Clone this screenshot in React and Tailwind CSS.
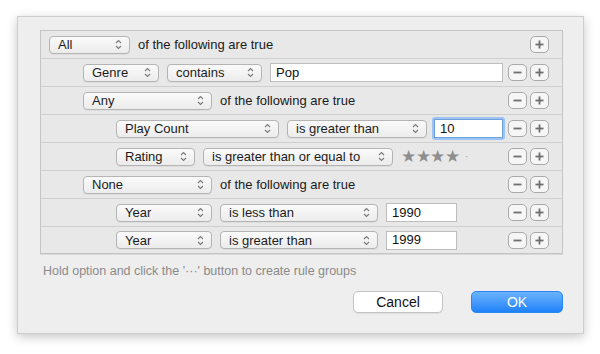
import React from 'react'

const font = { fontFamily: '"Liberation Sans", Arial, sans-serif' }

function Chevrons(){
  return (
    <svg width="7" height="11" viewBox="0 0 7 11" className="shrink-0">
      <path d="M1 4 L3.5 1.5 L6 4" fill="none" stroke="#7a7a7a" strokeWidth="1.1" />
      <path d="M1 7 L3.5 9.5 L6 7" fill="none" stroke="#7a7a7a" strokeWidth="1.1" />
    </svg>
  )
}

function Popup({ label, w }){
  return (
    <div className="flex h-[18px] items-center justify-between rounded-[4px] border border-[#b4b4b4] bg-gradient-to-b from-[#fafafa] to-[#ececec] pl-[8px] pr-[7px] text-[13px] text-[#1c1c1c] shadow-[0_1px_0_rgba(0,0,0,0.04)]"
         style={{ width: w }}>
      <span className="leading-none">{label}</span>
      <Chevrons />
    </div>
  )
}

function Field({ value, w, focus }){
  if(focus){
    return (
      <div className="rounded-[3px] p-[2px] bg-[#9cc3f2]" style={{ width: w }}>
        <div className="flex h-[19px] items-center border border-[#6fa0dc] bg-white pl-[5px] text-[13px] text-[#111]">{value}</div>
      </div>
    )
  }
  return (
    <div className="flex h-[19px] items-center border border-[#bdbdbd] bg-white pl-[5px] text-[13px] text-[#111]" style={{ width: w }}>{value}</div>
  )
}

function SmallBtn({ sign }){
  return (
    <div className="flex h-[17px] w-[19px] items-center justify-center rounded-[5px] border border-[#a9a9a9] bg-[#f6f6f6]">
      <svg width="9" height="9" viewBox="0 0 9 9">
        <path d="M0.5 4.5 H8.5" stroke="#6e6e6e" strokeWidth="1.8" />
        {sign === '+' && <path d="M4.5 0.5 V8.5" stroke="#6e6e6e" strokeWidth="1.8" />}
      </svg>
    </div>
  )
}

function Row({ pad, children, minus = true, last }){
  return (
    <div className={`flex items-center ${last ? 'h-[26px]' : 'h-[28px] border-b border-[#cfcfcf]'} ${pad}`}>
      <div className="flex items-center gap-[8px]">{children}</div>
      <div className="ml-auto flex items-center gap-[3px] pr-[13px]">
        {minus ? <SmallBtn sign="-" /> : null}
        <SmallBtn sign="+" />
      </div>
    </div>
  )
}

export default function App(){
  return (
    <div className="h-[354px] w-[600px] overflow-hidden bg-white pl-[17px] pt-[16px]" style={font}>
      <div className="h-[318px] w-[567px] border border-[#cdcdcd] bg-[#eeeeee] shadow-[0_3px_10px_rgba(0,0,0,0.22)]">
        <div className="ml-[22px] mt-[13px] w-[523px] border border-[#c4c4c4] bg-[#e8e8e8] shadow-[0_1px_0_#d8d8d8]">
          <Row pad="pl-[8px]" minus={false}>
            <Popup label="All" w={81} />
            <span className="text-[13px] text-[#1a1a1a]">of the following are true</span>
          </Row>
          <Row pad="pl-[42px]">
            <Popup label="Genre" w={76} />
            <Popup label="contains" w={95} />
            <Field value="Pop" w={233} />
          </Row>
          <Row pad="pl-[42px]">
            <Popup label="Any" w={129} />
            <span className="text-[13px] text-[#1a1a1a]">of the following are true</span>
          </Row>
          <Row pad="pl-[75px]">
            <Popup label="Play Count" w={163} />
            <Popup label="is greater than" w={140} />
            <div className="-ml-[3px]">
              <Field value="10" w={73} focus />
            </div>
          </Row>
          <Row pad="pl-[75px]">
            <Popup label="Rating" w={79} />
            <Popup label="is greater than or equal to" w={190} />
            <span className="flex items-center text-[17px] leading-none tracking-[-0.5px] text-[#8e8e8e]">
              ★★★★<span className="ml-[6px] text-[10px] text-[#9a9a9a]">·</span>
            </span>
          </Row>
          <Row pad="pl-[42px]">
            <Popup label="None" w={129} />
            <span className="text-[13px] text-[#1a1a1a]">of the following are true</span>
          </Row>
          <Row pad="pl-[75px]">
            <Popup label="Year" w={96} />
            <Popup label="is less than" w={158} />
            <Field value="1990" w={71} />
          </Row>
          <Row pad="pl-[75px]" last>
            <Popup label="Year" w={96} />
            <Popup label="is greater than" w={158} />
            <Field value="1999" w={71} />
          </Row>
        </div>

        <p className="ml-[25px] mt-[8px] text-[12.5px] text-[#8a8a8a]">
          Hold option and click the '···' button to create rule groups
        </p>

        <div className="mt-[10px] flex justify-end gap-[28px] pr-[20px]">
          <button className="h-[22px] w-[90px] rounded-[5px] border border-[#c4c4c4] bg-white text-[14px] text-[#111] shadow-[0_1px_0_rgba(0,0,0,0.06)]">Cancel</button>
          <button className="h-[22px] w-[92px] rounded-[5px] border border-[#2a86f0] bg-gradient-to-b from-[#6ab2fb] to-[#1c82fa] text-[14px] text-white">OK</button>
        </div>
      </div>
    </div>
  )
}
